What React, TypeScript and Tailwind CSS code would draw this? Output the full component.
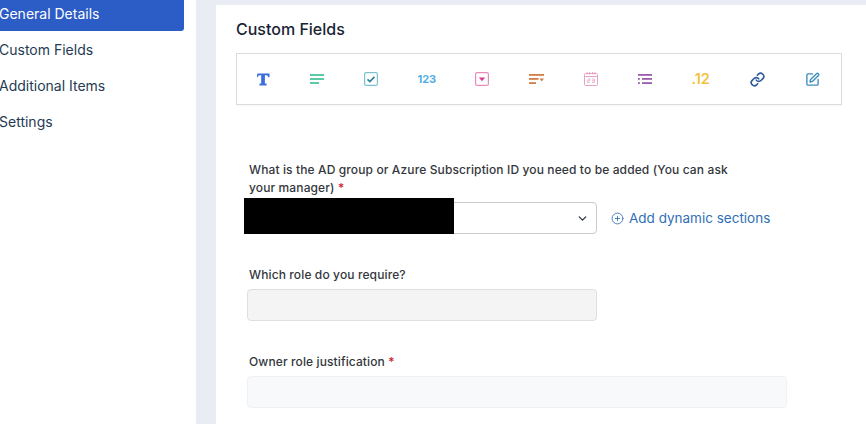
import { ChevronDown, CirclePlus, Link, SquarePen } from "lucide-react";

const sideItems = ["General Details", "Custom Fields", "Additional Items", "Settings"];

function TextIcon() {
  return (
    <svg width="13" height="13" viewBox="0 0 14 14" fill="#3b6fdc" className="shrink-0">
      <path d="M0.5 0.5h13v4.200h-1.300c-.3-1.500-.8-2.300-2.400-2.300h-1.300v9h1.800v2.100h-7.600v-2.100h1.800v-9h-1.300c-1.600 0-2.100.8-2.400 2.300h-1.300z" />
    </svg>
  );
}

function ParagraphIcon() {
  return (
    <svg width="14" height="10" viewBox="0 0 14 10" fill="#5cc9a7" className="shrink-0">
      <rect x="0" y="0" width="14" height="2" />
      <rect x="0" y="4" width="14" height="2" />
      <rect x="0" y="8" width="9" height="2" />
    </svg>
  );
}

function CheckIcon() {
  return (
    <svg width="14" height="14" viewBox="0 0 14 14" fill="none" className="shrink-0">
      <rect x="0.600" y="0.600" width="12.800" height="12.800" rx="1.500" stroke="#7cc3cf" strokeWidth="1.200" />
      <path d="M3.500 7.300l2.400 2.300 4.500-4.700" stroke="#2f8296" strokeWidth="1.700" />
    </svg>
  );
}

function DropdownIcon() {
  return (
    <svg width="14" height="14" viewBox="0 0 14 14" fill="none" className="shrink-0">
      <rect x="0.600" y="0.600" width="12.800" height="12.800" rx="1.500" stroke="#e78db9" strokeWidth="1.200" />
      <path d="M3.800 5.500h6.400l-3.200 3.700z" fill="#d63f8c" />
    </svg>
  );
}

function MultiSelectIcon() {
  return (
    <svg width="15" height="10" viewBox="0 0 15 10" fill="#d27d45" className="shrink-0">
      <rect x="0" y="0" width="15" height="1.800" />
      <rect x="0" y="4" width="9.500" height="1.800" />
      <rect x="0" y="8.200" width="7" height="1.800" />
      <path d="M10.500 4.500h4.500l-2.250 3z" />
    </svg>
  );
}

function DateIcon() {
  return (
    <svg width="14" height="14" viewBox="0 0 14 14" fill="none" stroke="#e7a3c2" strokeWidth="1" className="shrink-0">
      <rect x="0.500" y="1.500" width="13" height="12" rx="1" />
      <path d="M0.500 4.500h13M3 0v2.500M5.500 0v2.500M8.500 0v2.500M11 0v2.500" />
      <path d="M3.500 7h2.400v1.700h-2.400v1.700h2.400M8 7h2.400v3.400h-2.400M8 8.700h2.400" strokeWidth="0.800" />
    </svg>
  );
}

function ListIcon() {
  return (
    <svg width="14" height="10" viewBox="0 0 14 10" fill="#9a5cab" className="shrink-0">
      <rect x="0" y="0" width="14" height="1.800" />
      <rect x="0" y="4" width="1.800" height="1.800" />
      <rect x="4" y="4" width="10" height="1.800" />
      <rect x="0" y="8.200" width="1.800" height="1.800" />
      <rect x="4" y="8.200" width="10" height="1.800" />
    </svg>
  );
}

const tools = [
  <TextIcon />,
  <ParagraphIcon />,
  <CheckIcon />,
  <span className="w-[18px] text-[11px] font-bold text-[#4fb0e3]">123</span>,
  <DropdownIcon />,
  <MultiSelectIcon />,
  <DateIcon />,
  <ListIcon />,
  <span className="w-[19px] text-[14.500px] font-semibold text-[#f3c23c]">.12</span>,
  <Link className="w-[15px] h-[15px] shrink-0 text-[#2f5a9e]" strokeWidth={2.600} />,
  <SquarePen className="w-[15px] h-[15px] shrink-0 text-[#3d8fc0]" strokeWidth={2.200} />,
];

export default function App() {
  return (
    <div className="flex w-[866px] h-[424px] overflow-hidden bg-[#eaecf4] font-['Inter',sans-serif]">
      <div className="w-[196px] h-full bg-white shrink-0">
        <div className="-mt-[5px] w-[184px] flex flex-col">
          {sideItems.map((item, i) => (
            <div
              key={item}
              className={
                i === 0
                  ? "h-[36px] flex items-center -ml-px text-[14px] text-white bg-[#2c5cc5] rounded-br-[3px]"
                  : "h-[36px] flex items-center -ml-px text-[14px] text-[#243b53]"
              }
            >
              {item}
            </div>
          ))}
        </div>
      </div>

      <div className="ml-[20px] mt-[5px] flex-1 bg-white pl-[20px] pt-[14px]">
        <h2 className="text-[16px] leading-[20px] font-medium text-[#1a2433]">Custom Fields</h2>

        <div className="mt-[14px] w-[606px] h-[52px] flex items-center gap-[39.800px] pl-[20px] border border-[#dcdcdc] shadow-[0_1px_2px_rgba(0,0,0,0.04)]">
          {tools.map((tool, i) => (
            <div key={i} className="flex items-center justify-center">
              {tool}
            </div>
          ))}
        </div>

        <div className="mt-[56px] pl-[11px]">
          <div className="pl-[2px] w-[500px] text-[12px] leading-[18px] font-medium tracking-[0.12px] text-[#33373d]">
            What is the AD group or Azure Subscription ID you need to be added (You can ask your manager){" "}
            <span className="text-[#d0202e]">*</span>
          </div>

          <div className="mt-[5px] flex items-center">
            <div className="relative w-[350px] h-[32px] flex items-center justify-end pr-[7px] bg-white border border-[#c8cbd0] rounded-[4px]">
              <div className="absolute -left-[4px] -top-[5px] w-[210px] h-[36px] bg-black" />
              <ChevronDown className="w-[13px] h-[13px] text-[#2c3440]" strokeWidth={2.400} />
            </div>
            <div className="ml-[14px] flex items-center gap-[5px] text-[13.500px] text-[#2f6fb5]">
              <CirclePlus className="w-[13px] h-[13px]" strokeWidth={1.600} />
              Add dynamic sections
            </div>
          </div>

          <div className="mt-[32px] pl-[2px] text-[12px] leading-[18px] font-medium tracking-[0.12px] text-[#33373d]">
            Which role do you require?
          </div>
          <div className="mt-[5px] w-[350px] h-[32px] bg-[#f4f4f4] border border-[#dfdfdf] rounded-[4px]" />

          <div className="mt-[32px] pl-[2px] text-[12px] leading-[18px] font-medium tracking-[0.12px] text-[#33373d]">
            Owner role justification <span className="text-[#d0202e]">*</span>
          </div>
          <div className="mt-[5px] w-[540px] h-[32px] bg-[#f8f9fa] border border-[#f0f1f3] rounded-[4px]" />
        </div>
      </div>
    </div>
  );
}
